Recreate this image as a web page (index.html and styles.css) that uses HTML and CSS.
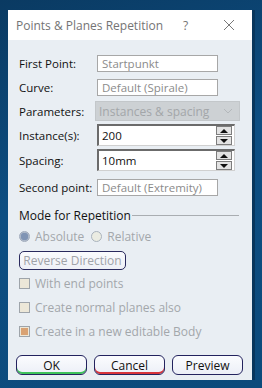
FILE: index.html
```html
<!DOCTYPE html>
<html>
  <head>
    <link rel="stylesheet" href="styles.css">
  </head>
  <body>
    <div class="dialog">
      <div class="titlebar">
        <span class="title">Points &amp; Planes Repetition</span>
        <span class="help">?</span>
        <span class="close">
          <svg width="12" height="12" viewBox="0 0 12 12">
            <path d="M1 1 L11 11 M11 1 L1 11" stroke="#777" stroke-width="1" fill="none" />
          </svg>
        </span>
      </div>

      <div class="content">
        <div class="row">
          <span class="label">First Point:</span>
          <div class="field">Startpunkt</div>
        </div>
        <div class="row">
          <span class="label">Curve:</span>
          <div class="field">Default (Spirale)</div>
        </div>
        <div class="row row-select">
          <span class="label">Parameters:</span>
          <div class="combo">
            <span>Instances &amp; spacing</span>
            <svg width="10" height="6" viewBox="0 0 10 6">
              <path d="M1 1 L5 5 L9 1" stroke="#b4b8bb" stroke-width="1" fill="none" />
            </svg>
          </div>
        </div>
        <div class="row row-spin">
          <span class="label">Instance(s):</span>
          <div class="spin">
            <span class="spin-value">200</span>
            <div class="spin-buttons">
              <span class="spin-btn"><i class="tri up"></i></span>
              <span class="spin-btn"><i class="tri down"></i></span>
            </div>
          </div>
        </div>
        <div class="row row-spin">
          <span class="label">Spacing:</span>
          <div class="spin">
            <span class="spin-value">10mm</span>
            <div class="spin-buttons">
              <span class="spin-btn"><i class="tri up"></i></span>
              <span class="spin-btn"><i class="tri down"></i></span>
            </div>
          </div>
        </div>
        <div class="row row-second">
          <span class="label">Second point:</span>
          <div class="field">Default (Extremity)</div>
        </div>

        <div class="group-title">
          <span>Mode for Repetition</span>
          <span class="group-line"></span>
        </div>

        <div class="radios">
          <span class="radio"><i class="dot checked"></i>Absolute</span>
          <span class="radio"><i class="dot"></i>Relative</span>
        </div>

        <button class="reverse">Reverse Direction</button>

        <div class="check first-check"><i class="box"></i>With end points</div>
        <div class="check"><i class="box"></i>Create normal planes also</div>
        <div class="check"><i class="box on"></i>Create in a new editable Body</div>

        <div class="actions">
          <button class="action ok">OK</button>
          <button class="action cancel">Cancel</button>
          <button class="action">Preview</button>
        </div>
      </div>
    </div>
  </body>
</html>
```

FILE: styles.css
```css
html,
body {
  margin: 0;
  height: 100%;
}

body {
  background: linear-gradient(160deg, #0a3a62 0%, #0d4e82 45%, #0c4a7b 100%);
  font-family: "Open Sans", "Noto Sans", sans-serif;
  font-size: 11.5px;
  color: #111;
  padding: 10px 0 0 8px;
  box-sizing: border-box;
}

.dialog {
  width: 244px;
  height: 370px;
  background: #e9eef3;
  box-shadow: 3px 0 0 #08365c;
  display: flex;
  flex-direction: column;
}

.titlebar {
  height: 30px;
  background: #fff;
  display: flex;
  align-items: center;
  padding-left: 8px;
  color: #747474;
  font-size: 12px;
}

.title {
  width: 167px;
}

.help {
  width: 40px;
}

.close {
  display: flex;
}

.content {
  padding: 15px 0 0 11px;
  display: flex;
  flex-direction: column;
}

.row {
  display: flex;
  align-items: center;
  height: 17px;
  margin-bottom: 7px;
}

.label {
  width: 78px;
}

.field {
  width: 118px;
  height: 15px;
  border: 1px solid #a7a7a7;
  background: #fff;
  color: #8b8b8b;
  padding-left: 4px;
  line-height: 15px;
  box-sizing: content-box;
  width: 115px;
}

.row-select {
  height: 20px;
  margin-top: -2px;
  margin-bottom: 3px;
}

.combo {
  margin-left: -2px;
  width: 145px;
  height: 20px;
  background: #cdd1d4;
  border: 1px solid #c3c7ca;
  box-sizing: border-box;
  color: #a3a6a9;
  display: flex;
  align-items: center;
  justify-content: space-between;
  padding: 0 6px 0 3px;
  font-size: 12px;
}

.row-spin {
  height: 22px;
  margin-bottom: 3px;
}

.spin {
  width: 138px;
  height: 22px;
  box-sizing: border-box;
  background: #fff;
  border-top: 2px solid #6b6b6b;
  border-left: 2px solid #6b6b6b;
  border-bottom: 1px solid #d0d0d0;
  border-right: 1px solid #d0d0d0;
  display: flex;
  align-items: center;
  justify-content: space-between;
  padding: 0 2px 0 3px;
}

.spin-value {
  color: #111;
}

.spin-buttons {
  display: flex;
  flex-direction: column;
  gap: 1px;
}

.spin-btn {
  width: 14px;
  height: 7px;
  background: #e3e3e3;
  border: 1px solid #7d7d7d;
  display: flex;
  align-items: center;
  justify-content: center;
}

.tri {
  width: 0;
  height: 0;
  border-left: 4px solid transparent;
  border-right: 4px solid transparent;
}

.tri.up {
  border-bottom: 4px solid #111;
}

.tri.down {
  border-top: 4px solid #111;
}

.row-second {
  margin-top: 5px;
  margin-bottom: 11px;
}

.group-title {
  display: flex;
  align-items: center;
  font-size: 12px;
  height: 16px;
}

.group-line {
  flex: 1;
  height: 1px;
  background: #a9adb1;
  margin: 1px 13px 0 1px;
}

.radios {
  display: flex;
  gap: 7px;
  margin-top: 5px;
  height: 17px;
  align-items: center;
  color: #a3a7ab;
  font-size: 12px;
}

.radio {
  display: flex;
  align-items: center;
}

.dot {
  width: 11px;
  height: 11px;
  border-radius: 50%;
  border: 1px solid #a9b3bd;
  background: #ebece2;
  margin-right: 5px;
  box-sizing: border-box;
}

.dot.checked {
  background: radial-gradient(circle, #8094b4 0 3.5px, #aeb9c9 4px);
  border-color: #a0aabb;
}

.reverse {
  align-self: flex-start;
  margin-top: 6px;
  margin-left: 0;
  width: 107px;
  height: 19px;
  border: 1px solid #2a2a5e;
  border-radius: 5px;
  background: linear-gradient(#fafbfd, #eef0f6);
  color: #a0a3a8;
  font-family: inherit;
  font-size: 12px;
  padding: 0;
}

.check {
  display: flex;
  align-items: center;
  height: 16px;
  color: #a3a7ab;
  font-size: 12px;
  margin-bottom: 8px;
}

.first-check {
  margin-top: 5px;
}

.box {
  width: 11px;
  height: 11px;
  border: 1px solid #9ea4aa;
  background: #ece7d8;
  margin-right: 5px;
  box-sizing: border-box;
}

.box.on {
  background: #d9a273;
  box-shadow: inset 0 0 0 1px #ece7d8;
}

.actions {
  display: flex;
  gap: 7px;
  margin-top: 8px;
  margin-left: -3px;
}

.action {
  width: 71px;
  height: 20px;
  border: 1px solid #23235e;
  border-radius: 6px;
  background: linear-gradient(#fbfcfe, #eceff7);
  font-family: inherit;
  font-size: 12px;
  color: #111;
  padding: 0;
}

.ok {
  box-shadow: inset 0 -2px 0 #3ec25a;
}

.cancel {
  box-shadow: inset 0 -2px 0 #d8343a;
}
```
